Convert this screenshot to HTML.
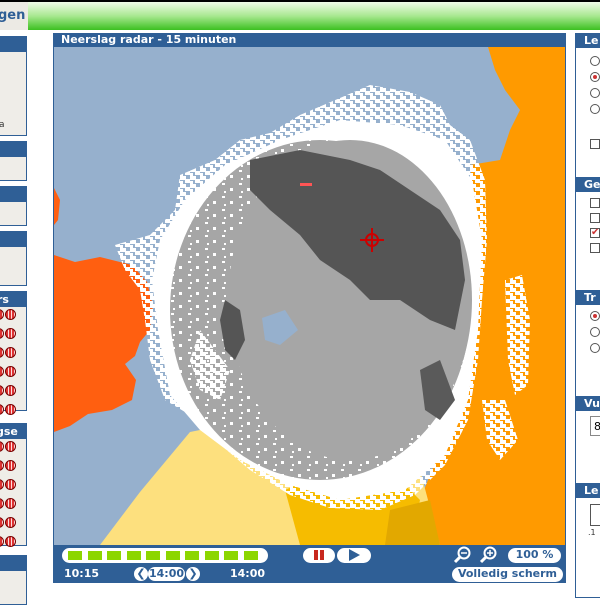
<!DOCTYPE html>
<html><head><meta charset="utf-8"><style>
*{margin:0;padding:0;box-sizing:border-box}
body{width:600px;height:600px;overflow:hidden;background:#fff;font-family:Verdana,"DejaVu Sans","Liberation Sans",sans-serif;position:relative}
.abs{position:absolute}
.hdr{background:#2f5f96;color:#fff;font-weight:bold;font-size:11px;line-height:15px;height:15px;overflow:hidden;white-space:nowrap}
.pan{position:absolute;border:1px solid #2f5f96;background:#efede8}
.globe{display:inline-block;width:11px;height:11px;border-radius:50%;background:repeating-linear-gradient(90deg,#d33 0 2px,#fdd 2px 3px),#d33;border:1px solid #700;margin-right:1px}
.pill{position:absolute;background:#fff;border-radius:8px;color:#2f5f96;font-weight:bold;font-size:11px;text-align:center;line-height:14px}
.rad{position:absolute;width:10px;height:10px;border-radius:50%;border:1px solid #555;background:#fff}
.chk{position:absolute;width:10px;height:10px;border:1px solid #555;background:#fff}
</style></head><body>
<div class="abs" style="left:0;top:0;width:600px;height:2px;background:#000"></div>
<div class="abs" style="left:0;top:2px;width:28px;height:28px;background:#eceae4;color:#2f5f96;font-weight:bold;font-size:13px;line-height:28px;text-indent:-2px;overflow:hidden;white-space:nowrap">gen</div>
<div class="abs" style="left:28px;top:2px;width:572px;height:28px;background:linear-gradient(#f0fbe8,#a8e890 50%,#3cc020)"></div>

<div class="pan" style="left:-2px;top:36px;width:29px;height:100px"><div class="hdr"></div><div style="font-size:9px;color:#333;position:absolute;top:83px;left:0">a</div></div>
<div class="pan" style="left:-2px;top:141px;width:29px;height:40px"><div class="hdr"></div></div>
<div class="pan" style="left:-2px;top:186px;width:29px;height:40px"><div class="hdr"></div></div>
<div class="pan" style="left:-2px;top:231px;width:29px;height:55px"><div class="hdr"></div></div>
<div class="pan" style="left:-2px;top:291px;width:29px;height:120px"><div class="hdr" style="text-indent:-2px">rs</div>
<div style="padding:2px 0 0 0;line-height:15px;font-size:0;margin-left:-6px">
<span class="globe"></span><span class="globe"></span><br><span class="globe"></span><span class="globe"></span><br><span class="globe"></span><span class="globe"></span><br><span class="globe"></span><span class="globe"></span><br><span class="globe"></span><span class="globe"></span><br><span class="globe"></span><span class="globe"></span></div></div>
<div class="pan" style="left:-2px;top:423px;width:29px;height:123px"><div class="hdr" style="text-indent:-3px">gse</div>
<div style="padding:2px 0 0 0;line-height:16px;font-size:0;margin-left:-6px">
<span class="globe"></span><span class="globe"></span><br><span class="globe"></span><span class="globe"></span><br><span class="globe"></span><span class="globe"></span><br><span class="globe"></span><span class="globe"></span><br><span class="globe"></span><span class="globe"></span><br><span class="globe"></span><span class="globe"></span></div></div>
<div class="pan" style="left:-2px;top:555px;width:29px;height:50px"><div class="hdr"></div></div>

<div class="abs" style="left:53px;top:33px;width:513px;height:550px;background:#2f5f96;border:1px solid #2f5f96"></div>
<div class="hdr abs" style="left:54px;top:33px;width:511px;padding-left:7px;height:14px;line-height:14px">Neerslag radar - 15 minuten</div>
<svg class="abs" style="left:54px;top:47px" width="511" height="498" viewBox="54 47 511 498">
<defs>
<pattern id="sp" width="17" height="13" patternUnits="userSpaceOnUse">
<rect width="17" height="13" fill="#a6a6a6"/><rect x="1" y="1" width="3" height="2" fill="#fff"/><rect x="9" y="6" width="3" height="3" fill="#fff"/><rect x="3" y="9" width="2" height="2" fill="#fff"/>
</pattern>
<pattern id="ws" width="10" height="8" patternUnits="userSpaceOnUse">
<rect x="0" y="0" width="6" height="4" fill="#fff"/><rect x="5" y="3" width="5" height="4" fill="#fff"/><rect x="0" y="5" width="3" height="3" fill="#fff"/>
</pattern>
</defs>
<rect x="54" y="47" width="511" height="498" fill="#96b0cd"/>
<path d="M54,255 L75,262 L100,257 L132,265 L147,282 L153,305 L150,330 L140,342 L135,356 L125,364 L136,380 L132,400 L112,410 L88,414 L70,426 L54,432Z" fill="#ff5f10"/>
<path d="M54,188 L60,200 L58,220 L54,225Z" fill="#ff5f10"/>
<path d="M488,47 L565,47 L565,545 L398,545 L420,500 L440,450 L460,400 L470,330 L478,260 L474,200 L470,165 L500,160 L510,130 L520,110 L505,90 L495,70Z" fill="#ff9a00"/>
<path d="M100,545 L140,492 L190,432 L250,420 L420,470 L440,545Z" fill="#fde07e"/>
<path d="M285,490 L330,470 L400,480 L420,500 L410,545 L300,545Z" fill="#f6bc00"/>
<path d="M390,510 L430,500 L440,545 L385,545Z" fill="#e2a800"/>
<path d="M505,280 L522,275 L530,320 L528,385 L515,395 L508,360Z" fill="url(#ws)"/>
<path d="M482,400 L505,400 L518,440 L500,460 L487,440Z" fill="url(#ws)"/>
<path d="M115,245 L150,235 L175,210 L180,175 L215,160 L240,140 L270,133 L300,115 L340,98 L370,85 L410,92 L440,105 L450,125 L470,140 L485,180 L487,240 L482,300 L478,360 L468,420 L445,465 L415,495 L380,510 L330,508 L290,495 L250,470 L215,440 L190,415 L165,400 L150,360 L145,320 L140,290 L125,270Z" fill="url(#ws)"/>
<path d="M160,240 L185,200 L225,165 L280,140 L340,120 L400,125 L445,140 L472,180 L482,240 L478,330 L468,400 L445,455 L405,490 L340,500 L290,485 L240,460 L200,430 L170,395 L158,330 L152,280Z" fill="#fff"/>
<path d="M130,255 L155,240 L165,265 L150,290 L135,280Z" fill="url(#ws)"/>
<ellipse cx="320" cy="310" rx="150" ry="170" fill="url(#sp)"/>
<ellipse cx="350" cy="300" rx="122" ry="160" fill="#a6a6a6"/>
<path d="M250,160 L300,150 L350,160 L380,170 L410,190 L440,210 L460,240 L465,280 L455,330 L430,320 L400,300 L370,300 L350,280 L320,260 L300,235 L270,210 L250,190Z" fill="#555"/>
<path d="M225,300 L240,310 L245,340 L235,360 L225,350 L220,320Z" fill="#555"/>
<path d="M420,370 L440,360 L455,400 L440,420 L425,410Z" fill="#5a5a5a"/>
<path d="M262,318 L285,310 L298,330 L280,345 L265,340Z" fill="#96b0cd"/>
<path d="M200,330 L230,370 L220,400 L200,390 L190,360Z" fill="url(#ws)"/>
<circle cx="372" cy="240" r="6" fill="none" stroke="#c00" stroke-width="2"/>
<path d="M372,228 V252 M360,240 H384" stroke="#c00" stroke-width="2"/>
<path d="M300,183 h12 v3 h-12z" fill="#f55"/>
</svg>
<div class="pill" style="left:62px;top:548px;width:206px;height:15px"></div>
<div class="abs" style="left:68px;top:551px;font-size:0">
<span style="display:inline-block;width:14px;height:9px;background:#8cd600;margin-right:5.5px"></span><span style="display:inline-block;width:14px;height:9px;background:#8cd600;margin-right:5.5px"></span><span style="display:inline-block;width:14px;height:9px;background:#8cd600;margin-right:5.5px"></span><span style="display:inline-block;width:14px;height:9px;background:#8cd600;margin-right:5.5px"></span><span style="display:inline-block;width:14px;height:9px;background:#8cd600;margin-right:5.5px"></span><span style="display:inline-block;width:14px;height:9px;background:#8cd600;margin-right:5.5px"></span><span style="display:inline-block;width:14px;height:9px;background:#8cd600;margin-right:5.5px"></span><span style="display:inline-block;width:14px;height:9px;background:#8cd600;margin-right:5.5px"></span><span style="display:inline-block;width:14px;height:9px;background:#8cd600;margin-right:5.5px"></span><span style="display:inline-block;width:14px;height:9px;background:#8cd600"></span></div>
<div class="pill" style="left:303px;top:548px;width:32px;height:15px"><span style="display:inline-block;width:4px;height:10px;background:#c8281e;margin:2px 1px 0"></span><span style="display:inline-block;width:4px;height:10px;background:#c8281e;margin:2px 1px 0"></span></div>
<div class="pill" style="left:337px;top:548px;width:34px;height:15px"><svg width="14" height="12" style="margin-top:1px"><path d="M2,0 L13,6 L2,12Z" fill="#2f5f96"/></svg></div>
<svg class="abs" style="left:452px;top:546px" width="50" height="18"><g fill="none" stroke="#fff" stroke-width="2"><circle cx="12" cy="7" r="5.5"/><path d="M8,11 L3,16" stroke-width="3"/><circle cx="38" cy="7" r="5.5"/><path d="M34,11 L29,16" stroke-width="3"/></g><path d="M9,7h6 M35,7h6 M38,4v6" stroke="#fff" stroke-width="1.5"/></svg>
<div class="pill" style="left:508px;top:548px;width:53px;height:15px">100 %</div>
<div class="abs" style="left:64px;top:567px;color:#fff;font-weight:bold;font-size:11px">10:15</div>
<div class="pill" style="left:134px;top:567px;width:14px;height:14px;border-radius:7px">❮</div>
<div class="pill" style="left:148px;top:567px;width:37px;height:14px">14:00</div>
<div class="pill" style="left:186px;top:567px;width:14px;height:14px;border-radius:7px">❯</div>
<div class="abs" style="left:230px;top:567px;color:#fff;font-weight:bold;font-size:11px">14:00</div>
<div class="pill" style="left:452px;top:567px;width:111px;height:15px">Volledig scherm</div>

<div class="pan" style="left:575px;top:33px;width:30px;height:565px;background:#fff"></div>
<div class="hdr abs" style="left:576px;top:33px;width:24px;padding-left:8px">Le</div>
<div class="rad" style="left:590px;top:56px"></div><div class="rad" style="left:590px;top:72px"><div style="width:4px;height:4px;border-radius:50%;background:#c33;margin:2px"></div></div><div class="rad" style="left:590px;top:88px"></div><div class="rad" style="left:590px;top:104px"></div>
<div class="chk" style="left:590px;top:139px"></div>
<div class="hdr abs" style="left:576px;top:177px;width:24px;padding-left:8px">Ge</div>
<div class="chk" style="left:590px;top:198px"></div><div class="chk" style="left:590px;top:213px"></div><div class="chk" style="left:590px;top:228px;color:#c33;font-size:10px;line-height:8px">✔</div><div class="chk" style="left:590px;top:243px"></div>
<div class="hdr abs" style="left:576px;top:290px;width:24px;padding-left:8px">Tr</div>
<div class="rad" style="left:590px;top:311px"><div style="width:4px;height:4px;border-radius:50%;background:#c33;margin:2px"></div></div><div class="rad" style="left:590px;top:327px"></div><div class="rad" style="left:590px;top:343px"></div>
<div class="hdr abs" style="left:576px;top:396px;width:24px;padding-left:8px">Vu</div>
<div class="abs" style="left:590px;top:416px;width:14px;height:20px;border:1px solid #888;font-size:11px;padding:3px">8</div>
<div class="hdr abs" style="left:576px;top:483px;width:24px;padding-left:8px">Le</div>
<div class="abs" style="left:590px;top:504px;width:14px;height:22px;border:1px solid #555"></div>
<div class="abs" style="left:588px;top:528px;font-size:8px;color:#333">.1</div>
</body></html>
